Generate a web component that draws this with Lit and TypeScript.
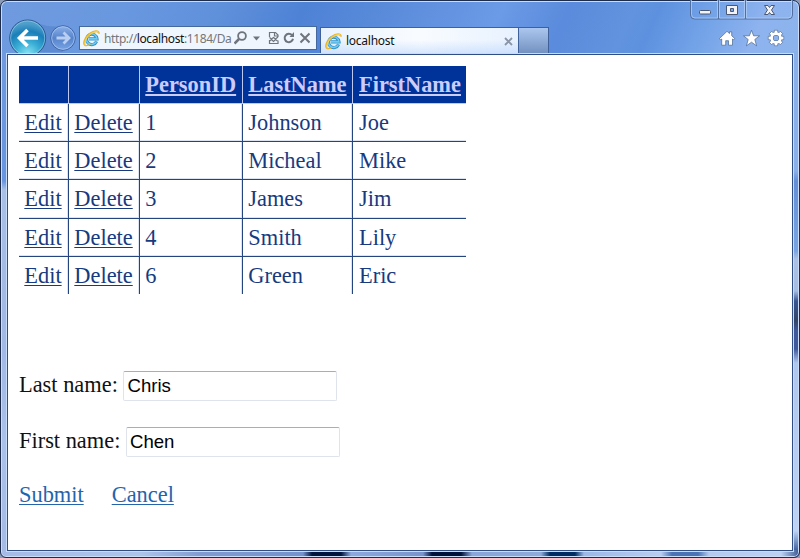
import { LitElement, html, css, svg } from "lit";
import { customElement } from "lit/decorators.js";

const people = [
  ["1", "Johnson", "Joe"],
  ["2", "Micheal", "Mike"],
  ["3", "James", "Jim"],
  ["4", "Smith", "Lily"],
  ["6", "Green", "Eric"],
];

const browserLogo = html`<svg class="logo" width="17" height="17" viewBox="0 0 17 17">
  <path d="M13.600 11.400A5.200 5.200 0 1 1 14 8.900H6" fill="none" stroke="#3391c9" stroke-width="3.200"/>
  <path d="M13.300 11.600A5.300 5.300 0 1 1 13.900 8.900H6" fill="none" stroke="#6fcbef" stroke-width="1.600"/>
  <path d="M2.600 15.600C-.4 14.600 1.400 8 6.800 3.800 11 .6 16 0 15.800 3.600" fill="none" stroke="#e9b52c" stroke-width="2"/>
  <path d="M2.600 15C.8 13.600 2.600 8 7.200 4.300 11 1.400 15 .8 15.500 2.400" fill="none" stroke="#fbdc62" stroke-width=".9"/>
  <path d="M2.500 15.500C4 16 6 15 7.200 14" fill="none" stroke="#e9b52c" stroke-width="1.300"/>
</svg>`;

@customElement("app-root")
export class AppRoot extends LitElement {
  static styles = css`
    :host { display: block; width: 800px; height: 558px; overflow: hidden; background: #8b9bb8; }
    * { box-sizing: border-box; }
    .window {
      position: relative; width: 800px; height: 558px; padding: 1px 5px 5px 5px;
      border: 1px solid #1e2c4c; border-radius: 7px 7px 6px 6px; box-shadow: inset 0 0 0 1px #c9dcf8;
      background:
        linear-gradient(90deg, #a5bbe6 0, #adc4ea 140px, #819bd0 200px, #7592cc 302px, #00143e 311px, #00143e 340px, #8ca8dc 350px, #7894cb 422px, #00113a 431px, #00113a 460px, #89a5d9 471px, #8eaada 540px, #002c62 549px, #002c62 574px, #9db8e6 583px, #b9cdf0 660px, #4a72b4 671px, #4a72b4 697px, #b4caef 708px, #bdd1f3 780px, #3c5a92 798px) 0 549px / 800px 9px no-repeat,
        linear-gradient(180deg, #8ab0ea 0, #8ab0ea 120px, #638fd6 130px, #79a4e3 200px, #abc0e4 208px, #a6bde2 240px, #3a5791 250px, #334566 270px, #40599a 280px, #40599a 298px, #b0c7ed 312px, #bdd2f4 480px, #3c5f9d 500px) 792px 50px / 8px 500px no-repeat,
        linear-gradient(180deg, #6f9ae0 0, #6795df 130px, #a9c0e6 139px, #a4bbe4 220px, #a2b8e6 300px, #aac1e9 390px, #a5bbe6 500px) 0 50px / 8px 500px no-repeat,
        linear-gradient(115deg, #6f9ade 0, #6998e0 15%, #5f90da 27%, #4e82d5 37%, #5b8cdb 48%, #6b9ae6 61%, #5a8bdc 69%, #6193de 77%, #5d91df 80%, #75a4e8 87%, #8eb3ef 93%, #8db3ec 100%) 0 0 / 800px 60px no-repeat, #8db3ec;
    }
    .chrome { height: 53px; display: flex; align-items: flex-end; }
    .nav { width: 72px; height: 36px; display: block; overflow: hidden; flex: none; }
    .address {
      width: 238px; height: 24px; margin: 0 0 5px 1px; border: 1px solid #45689f; background: #f0f6fd;
      display: flex; align-items: center; padding-left: 3px; flex: none; overflow: hidden;
    }
    .logo { flex: none; display: block; }
    .url {
      font: 12px/20px "Noto Sans", sans-serif; letter-spacing: -.4px; color: #777; margin-left: 4px;
      width: 127px; white-space: nowrap; height: 18px;
    }
    .url b { font-weight: 400; color: #111; }
    .tools { display: block; margin-left: 3px; flex: none; }
    .tab {
      width: 199px; height: 28px; margin-left: 3px; border: 1px solid #3f6098; border-bottom: 0;
      background: linear-gradient(90deg, rgba(190,218,255,.3), rgba(230,241,255,.1) 50%, rgba(185,214,253,.3)), linear-gradient(#fbfdff 0 45%, #d0e2fc);
      display: flex; align-items: center; padding: 0 5px 1px 4px; flex: none;
      font: 12px/22px "Noto Sans", sans-serif; letter-spacing: -.25px; color: #111;
    }
    .tab span { margin-left: 4px; flex: 1; }
    .newtab { width: 30px; height: 28px; border: 1px solid #3f6098; border-bottom: 0; border-left: 0; background: linear-gradient(#abc7ef, #6f8dbd); flex: none; }
    .commands { margin: 0 2px 7px auto; display: block; }
    .controls { position: absolute; right: 5px; top: -1px; }
    .page { width: 786px; height: 497px; margin-top: -1px; margin-left: 1px; background: #fff; border: 1px solid #2e4e85; box-shadow: 0 0 0 1px #c8dcf9; padding: 11px 11px; font: 22.4px/26px "Liberation Serif", serif; position: relative; }
    .grid { display: grid; width: 447px; grid-template-columns: 50px 71px 103px 110px 113px; grid-template-rows: 38px 38px 38px 39px 38px 37px; color: #173a80; }
    .cell { padding: 6px 0 0 5.300px; border-right: 1px solid #24457d; border-bottom: 1px solid #24457d; white-space: nowrap; box-shadow: inset -1px -1px 0 #dce4f1; }
    .head { background: #003399; color: #ccccff; font-weight: bold; border-color: #bfc9ef; box-shadow: none; }
    .end { border-right: 0; padding-left: 6px; box-shadow: inset 0 -1px 0 #dce4f1; }
    .head.end { box-shadow: none; }
    .last { border-bottom: 0; box-shadow: inset -1px 0 0 #dce4f1; }
    .last.end { box-shadow: none; }
    .link { text-decoration: underline; text-decoration-thickness: 1px; text-underline-offset: 2px; }
    .head .link { text-decoration-thickness: 2px; text-underline-offset: 2px; }
    .form { margin-top: 77px; color: #111; }
    .field { display: flex; gap: 5.600px; height: 30px; margin-bottom: 26px; align-items: flex-start; white-space: nowrap; }
    .field label { padding-top: 1px; }
    .field input { width: 214px; height: 30px; padding: 0 3px; border: 1px solid #dfe3eb; border-top-color: #abadb3; border-radius: 2px; font: 18.6px "Liberation Sans", sans-serif; color: #000; background: #fff; outline: 0; margin: 0; }
    .actions { display: flex; gap: 28px; color: #2464ad; margin-top: -1px; }
  `;

  render() {
    return html`<div class="window">
      <div class="chrome">
        <svg class="nav" viewBox="6 18 72 36">
          <defs>
            <radialGradient id="back" cx=".5" cy=".95" r=".85"><stop stop-color="#8be4f5"/><stop offset=".4" stop-color="#3aaed6"/><stop offset=".75" stop-color="#1b7fb9"/><stop offset="1" stop-color="#4f9fcb"/></radialGradient>
            <linearGradient id="fwd" x2="0" y2="1"><stop stop-color="#8eb2ea"/><stop offset=".5" stop-color="#5583cb"/><stop offset="1" stop-color="#79a4e6"/></linearGradient>
          </defs>
          <path d="M38 22q11 5 25 3v26H38z" fill="#527fc4" opacity=".55"/>
          <circle cx="27.700" cy="37" r="18" fill="url(#back)" stroke="#2e578f"/>
          <circle cx="27.700" cy="37" r="17" fill="none" stroke="#a9d9ee" stroke-width=".8" opacity=".7"/>
          <path d="M38 37H20M27.500 29L19.500 37L27.500 45" fill="none" stroke="#fff" stroke-width="3.600"/>
          <circle cx="63" cy="37" r="12.300" fill="url(#fwd)" stroke="#3e66a8"/>
          <circle cx="63" cy="37" r="11.300" fill="none" stroke="#a8c5f1" stroke-width=".8"/>
          <path d="M56.500 37H68M63.500 31.500L69 37L63.500 42.500" fill="none" stroke="#b9cff2" stroke-width="2.800"/>
        </svg>
        <div class="address">
          ${browserLogo}
          <div class="url">http://<b>localhost</b>:1184/Da</div>
          <svg class="tools" width="80" height="20" viewBox="234 28 80 20" fill="none" stroke="#6f747d">
            <circle cx="242" cy="36" r="3.900" stroke-width="1.800"/><path d="M239 39l-4.500 4.500" stroke-width="2.500"/>
            <path d="M253 36.500h7l-3.500 4z" fill="#6f747d" stroke="none"/>
            <path d="M269.500 37v-4.500h6l2.500 2.500v2M269.500 40v3.500h8.500v-3" stroke-width="1.200"/><path d="M274.500 33v3h3.500M269.500 37.500l2 1.500 2-1.500 2 1.500 2.500-2M269.500 41l2-1.500 2 2 2-2 2 1.500" stroke-width="1.200"/>
            <path d="M292 35.200a4.200 4.200 0 1 0 1 3.600" stroke-width="2"/><path d="M289.500 37h4.500v-5z" fill="#6f747d" stroke="none"/>
            <path d="M300.500 33.500l9 9M309.500 33.500l-9 9" stroke-width="2"/>
          </svg>
        </div>
        <div class="tab">${browserLogo}<span>localhost</span>
          <svg width="9" height="9" viewBox="0 0 9 9"><path d="M1 1l7 7M8 1L1 8" stroke="#8a95a8" stroke-width="1.900"/></svg>
        </div>
        <div class="newtab"></div>
        <svg class="commands" width="76" height="20" viewBox="716 28 76 20" fill="#fff" stroke="#48658f" stroke-width=".7" stroke-linejoin="round">
          <path d="M719.500 38.500l7.500-7.200 2.500 2.300v-1.700h2.200v3.800l3 2.800-1 1.300-1.200-.8v6.200h-4v-4.500h-2.800v4.500h-4V39l-1.200.8z"/>
          <path d="M751.500 30.300l2.100 5.500h5.900l-4.700 3.700 1.800 6.300-5.100-3.600-5.100 3.600 1.800-6.300-4.700-3.700h5.900z"/>
          ${[0, 45, 90, 135, 180, 225, 270, 315].map(a => svg`<rect x="774.300" y="30.300" width="3.400" height="4" transform="rotate(${a} 776 38)"/>`)}
          <circle cx="776" cy="38" r="4.500" fill="none" stroke="#48658f" stroke-width="3.800"/>
          <circle cx="776" cy="38" r="4.500" fill="none" stroke="#fff" stroke-width="2.800"/>
          ${[0, 45, 90, 135, 180, 225, 270, 315].map(a => svg`<rect x="774.800" y="30.800" width="2.400" height="3" stroke="none" transform="rotate(${a} 776 38)"/>`)}
        </svg>
        <svg class="controls" width="104" height="21" viewBox="690 0 104 21">
          <path d="M690.500 0v15q0 4 4 4h94q4 0 4-4V0M718.500 0v19M745.500 0v19" fill="none" stroke="#506f9f"/>
          <path d="M691.500 0v14.500q0 3.500 3.500 3.500h22.500V0M719.500 0v18h25V0M746.500 0v18h41.500q3.500 0 3.500-3.500V0" fill="none" stroke="#b8d1f7" stroke-width=".7"/>
          <g stroke="#4a5874" fill="#f3f3f5"><rect x="699.500" y="10.500" width="11" height="3.500" rx="1"/>
          <path d="M726.500 5.500h11v9h-11zM730.500 8.500v3h3v-3z" fill-rule="evenodd"/>
          <path d="M764.500 5.500h3.500l1.500 2 1.500-2h3.500l-3 4.500 3 4.500H771l-1.500-2-1.500 2h-3.500l3-4.500z"/></g>
        </svg>
      </div>
      <div class="page">
        <div class="grid">
          ${["", "", "PersonID", "LastName", "FirstName"].map((t, i) => html`<div class="cell head ${i === 4 ? "end" : ""}"><span class="link">${t}</span></div>`)}
          ${people.map((p, r) => {
            const last = r === people.length - 1 ? "last" : "";
            return html`<div class="cell ${last}"><span class="link">Edit</span></div><div class="cell ${last}"><span class="link">Delete</span></div>
              ${p.map((v, i) => html`<div class="cell ${last} ${i === 2 ? "end" : ""}">${v}</div>`)}`;
          })}
        </div>
        <div class="form">
          <div class="field"><label>Last name:</label><input .value=${"Chris"}></div>
          <div class="field"><label>First name:</label><input .value=${"Chen"}></div>
          <div class="actions"><span class="link">Submit</span><span class="link">Cancel</span></div>
        </div>
      </div>
    </div>`;
  }
}
